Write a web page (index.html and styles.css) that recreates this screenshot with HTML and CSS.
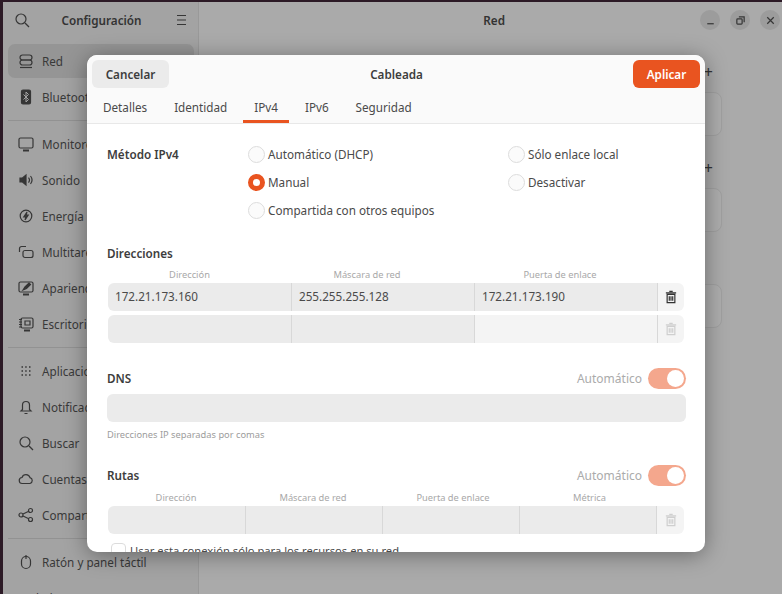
FILE: index.html
```html
<!DOCTYPE html>
<html lang="es">
<head>
    <meta charset="UTF-8">
    <meta name="viewport" content="width=device-width, initial-scale=1.0">
    <title>Configuración - Red</title>
    <link rel="stylesheet" href="styles.css">
</head>

<body>
    <div class="window">
        <aside class="sidebar">
            <div class="side-header">
                <svg class="icon" viewBox="0 0 16 16"><circle cx="7" cy="7" r="5"/><path d="M11 11l4 4"/></svg>
                <span class="side-title">Configuración</span>
                <svg class="icon" viewBox="0 0 16 16"><path d="M4 3.5h9M4 8h9M4 12.5h9"/></svg>
            </div>
            <ul class="side-list">
                <li class="side-item selected"><svg class="icon" viewBox="0 0 16 16"><rect x="2" y="2" width="12" height="5" rx="2.5"/><rect x="2" y="7" width="12" height="5" rx="2.5"/><path d="M2 14.5h12"/></svg>Red</li>
                <li class="side-item"><svg class="icon" viewBox="0 0 16 16"><rect class="solid" x="3.5" y="1" width="9" height="14" rx="1.5"/><path class="knock" d="M5.5 5.5l5 5L8 13V3l2.5 2.5-5 5"/></svg>Bluetooth</li>
                <li class="side-sep"></li>
                <li class="side-item"><svg class="icon" viewBox="0 0 16 16"><rect x="1" y="2" width="14" height="10" rx="1.5"/><path d="M5 14.5h6" stroke-width="2"/></svg>Monitores</li>
                <li class="side-item"><svg class="icon" viewBox="0 0 16 16"><path class="solid" d="M2 6h2.5L8 3v10L4.5 10H2z"/><path d="M10.5 5.5a4 4 0 0 1 0 5M12.5 4a6.5 6.5 0 0 1 0 8"/></svg>Sonido</li>
                <li class="side-item"><svg class="icon" viewBox="0 0 16 16"><circle cx="8" cy="8" r="5.8"/><path class="solid" d="M9 4L5.8 8.8H8L7 12l3.2-4.8H8z"/></svg>Energía</li>
                <li class="side-item"><svg class="icon" viewBox="0 0 16 16"><path d="M1.5 8V4.5a2 2 0 0 1 2-2H8"/><rect x="5" y="6.5" width="10" height="7" rx="2"/></svg>Multitarea</li>
                <li class="side-item"><svg class="icon" viewBox="0 0 16 16"><rect x="1" y="2" width="14" height="10" rx="1.5"/><path d="M5 14.5h6" stroke-width="2"/><path class="solid" d="M5 10l2-3 4-4 1.5 1.5-4 4z"/></svg>Apariencia</li>
                <li class="side-item"><svg class="icon" viewBox="0 0 16 16"><rect x="3" y="2" width="12" height="10" rx="1.5"/><path d="M6 14.5h6" stroke-width="2"/><path d="M1 3.5h3M1 6h3M1 8.5h3M1 11h3M7 5h5v4H7z"/></svg>Escritorio</li>
                <li class="side-sep"></li>
                <li class="side-item"><svg class="icon" viewBox="0 0 16 16"><path class="dots" d="M3.5 4h1.5M7.2 4h1.5M11 4h1.5M3.5 8h1.5M7.2 8h1.5M11 8h1.5M3.5 12h1.5M7.2 12h1.5M11 12h1.5"/></svg>Aplicaciones</li>
                <li class="side-item"><svg class="icon" viewBox="0 0 16 16"><path d="M4.5 10.5V6a3.5 3.5 0 0 1 7 0v4.5l1.5 1.5H3zM6.5 14.5h3"/></svg>Notificaciones</li>
                <li class="side-item"><svg class="icon" viewBox="0 0 16 16"><circle cx="7" cy="7" r="5"/><path d="M11 11l4 4"/></svg>Buscar</li>
                <li class="side-item"><svg class="icon" viewBox="0 0 16 16"><path d="M4.5 12.5a3 3 0 0 1-.5-6 4.2 4.2 0 0 1 8 .2 3 3 0 0 1 0 5.8z"/></svg>Cuentas en línea</li>
                <li class="side-item"><svg class="icon" viewBox="0 0 16 16"><circle cx="3" cy="8" r="2"/><circle cx="12.5" cy="3.5" r="2"/><circle cx="12.5" cy="12.5" r="2"/><path d="M5 7l5.8-2.7M5 9l5.8 2.7"/></svg>Compartir</li>
                <li class="side-sep"></li>
                <li class="side-item"><svg class="icon" viewBox="0 0 16 16"><rect x="3.5" y="2.5" width="9" height="12" rx="4.5"/><path d="M8 1v4"/></svg>Ratón y panel táctil</li>
                <li class="side-item">Teclado</li>
            </ul>
        </aside>

        <main class="main">
            <div class="main-header">
                <span class="main-title">Red</span>
                <div class="win-buttons">
                    <span class="win-btn"><svg class="icon small" viewBox="0 0 16 16"><path d="M4 12h8"/></svg></span>
                    <span class="win-btn"><svg class="icon small" viewBox="0 0 16 16"><rect x="3.5" y="6" width="6.5" height="6.5" rx="1"/><path d="M6 3.5h6.5V10"/></svg></span>
                    <span class="win-btn"><svg class="icon small" viewBox="0 0 16 16"><path d="M4 4l8 8M12 4l-8 8"/></svg></span>
                </div>
            </div>
            <section class="net-group"><div class="plus">+</div><div class="net-card"></div></section>
            <section class="net-group"><div class="plus">+</div><div class="net-card"></div></section>
            <section class="net-group"><div class="plus">&nbsp;</div><div class="net-card"></div></section>
        </main>
    </div>

    <div class="dialog">
        <header class="dlg-head">
            <div class="dlg-bar">
                <button class="btn">Cancelar</button>
                <span class="dlg-title">Cableada</span>
                <button class="btn primary">Aplicar</button>
            </div>
            <nav class="tabs">
                <span class="tab">Detalles</span>
                <span class="tab">Identidad</span>
                <span class="tab active">IPv4</span>
                <span class="tab">IPv6</span>
                <span class="tab">Seguridad</span>
            </nav>
        </header>

        <div class="dlg-body">
            <div class="method">
                <span class="heading">Método IPv4</span>
                <div class="radio-col">
                    <label class="radio"><i class="dot"></i>Automático (DHCP)</label>
                    <label class="radio"><i class="dot on"></i>Manual</label>
                    <label class="radio"><i class="dot"></i>Compartida con otros equipos</label>
                </div>
                <div class="radio-col">
                    <label class="radio"><i class="dot"></i>Sólo enlace local</label>
                    <label class="radio"><i class="dot"></i>Desactivar</label>
                </div>
            </div>

            <section class="block addresses">
                <div class="heading">Direcciones</div>
                <div class="cols heads-3 col-heads">
                    <span>Dirección</span><span>Máscara de red</span><span>Puerta de enlace</span><span></span>
                </div>
                <div class="cols cols-3 row">
                    <span class="cell">172.21.173.160</span>
                    <span class="cell">255.255.255.128</span>
                    <span class="cell">172.21.173.190</span>
                    <span class="cell trash">
                        <svg class="trash-icon" viewBox="0 0 14 16"><path d="M5 1.5h4M1 3.2h12M2.5 5h9v9.5h-9zM5 7v5.5M7 7v5.5M9 7v5.5"/></svg>
                    </span>
                </div>
                <div class="cols cols-3 row">
                    <span class="cell"></span>
                    <span class="cell"></span>
                    <span class="cell faint"></span>
                    <span class="cell trash faint">
                        <svg class="trash-icon off" viewBox="0 0 14 16"><path d="M5 1.5h4M1 3.2h12M2.5 5h9v9.5h-9zM5 7v5.5M7 7v5.5M9 7v5.5"/></svg>
                    </span>
                </div>
            </section>

            <section class="block dns">
                <div class="block-head">
                    <span class="heading">DNS</span>
                    <span class="auto">Automático</span>
                    <span class="toggle"></span>
                </div>
                <div class="entry"></div>
                <div class="hint">Direcciones IP separadas por comas</div>
            </section>

            <section class="block routes">
                <div class="block-head">
                    <span class="heading">Rutas</span>
                    <span class="auto">Automático</span>
                    <span class="toggle"></span>
                </div>
                <div class="cols heads-4 col-heads tight">
                    <span>Dirección</span><span>Máscara de red</span><span>Puerta de enlace</span><span>Métrica</span><span></span>
                </div>
                <div class="cols cols-4 row">
                    <span class="cell"></span>
                    <span class="cell"></span>
                    <span class="cell"></span>
                    <span class="cell"></span>
                    <span class="cell trash faint">
                        <svg class="trash-icon off" viewBox="0 0 14 16"><path d="M5 1.5h4M1 3.2h12M2.5 5h9v9.5h-9zM5 7v5.5M7 7v5.5M9 7v5.5"/></svg>
                    </span>
                </div>
                <label class="check"><i class="box"></i>Usar esta conexión sólo para los recursos en su red</label>
            </section>
        </div>
    </div>
</body>
</html>
```

FILE: styles.css
```css
* {
    box-sizing: border-box;
}

html,
body {
    height: 100%;
}

body {
    margin: 0;
    overflow: hidden;
    font-family: "Noto Sans", sans-serif;
    font-size: 11.7px;
    color: #3d3d3d;
    background-color: #2c1a26;
}

.icon {
    width: 16px;
    height: 16px;
    flex: none;
    fill: none;
    stroke: #363636;
    stroke-width: 1.2;
}

.icon.small {
    width: 13px;
    height: 13px;
    stroke-width: 1.5;
}

.icon .solid {
    fill: #363636;
}

.icon .knock {
    stroke: #a3a3a3;
    stroke-width: 1;
}

.icon .dots {
    stroke-width: 1.6;
}

/* window behind the dialog */
.window {
    display: flex;
    height: 592px;
    margin: 2px 0 0 3px;
    background-color: #aaaaaa;
}

.sidebar {
    width: 196px;
    flex: none;
    padding: 0 4px 0 5px;
    background-color: #a3a3a3;
    border-right: 1px solid #999;
    overflow: hidden;
}

.side-header {
    display: flex;
    align-items: center;
    justify-content: space-between;
    height: 36px;
    padding: 0 5px 0 6px;
}

.side-title {
    font-weight: 600;
    color: #333;
}

.side-list {
    list-style-type: none;
    margin: 6px 0 0;
    padding: 0;
}

.side-item {
    display: flex;
    align-items: center;
    gap: 8px;
    height: 34px;
    margin-bottom: 2px;
    padding-left: 10px;
    border-radius: 7px;
    color: #393939;
}

.side-item.selected {
    background-color: #959595;
}

.side-sep {
    height: 1px;
    margin: 6px 0;
    background-color: #929292;
}

.main {
    flex: 1;
    padding-right: 60px;
}

.main-header {
    display: flex;
    align-items: center;
    justify-content: flex-end;
    height: 36px;
    margin-right: -60px;
    padding-right: 2px;
}

.main-title {
    margin-right: 195px;
    font-weight: 600;
    color: #333;
}

.win-buttons {
    display: flex;
    gap: 10px;
}

.win-btn {
    display: flex;
    align-items: center;
    justify-content: center;
    width: 20px;
    height: 20px;
    border-radius: 50%;
    background-color: #9c9c9c;
}

.net-group {
    height: 96px;
    padding-top: 24px;
}

.plus {
    height: 30px;
    text-align: right;
    font-size: 16px;
    line-height: 20px;
    padding-right: 9px;
    color: #333;
}

.net-card {
    height: 44px;
    border: 1px solid #a0a0a0;
    border-radius: 8px;
    background-color: #adadad;
}

/* dialog */
.dialog {
    position: absolute;
    left: 87px;
    top: 55px;
    width: 618px;
    height: 497px;
    display: flex;
    flex-direction: column;
    overflow: hidden;
    border-radius: 10px;
    background-color: #fff;
    box-shadow: 0 3px 22px rgba(0, 0, 0, 0.38);
}

.dlg-head {
    height: 69px;
    flex: none;
    background-color: #fafafa;
    border-bottom: 1px solid #e8e8e8;
}

.dlg-bar {
    display: flex;
    align-items: center;
    justify-content: space-between;
    padding: 5px 5px 0;
}

.dlg-title {
    margin-right: 9px;
    font-weight: 600;
    color: #3d3d3d;
}

.btn {
    height: 28px;
    width: 77px;
    border: none;
    border-radius: 6px;
    background-color: #ebebeb;
    font-family: inherit;
    font-size: 11.7px;
    font-weight: 600;
    color: #3d3d3d;
}

.btn.primary {
    width: 67px;
    background-color: #e95420;
    color: #fff;
}

.tabs {
    display: flex;
    gap: 5px;
    padding: 5px 0 0 5px;
}

.tab {
    height: 30px;
    padding: 0 11px;
    line-height: 28px;
    color: #4a4a4a;
}

.tab.active {
    border-bottom: 3px solid #e95420;
}

.dlg-body {
    flex: 1;
    overflow: hidden;
    padding: 23px 19px 0 20px;
}

.heading {
    font-weight: 600;
    line-height: 16px;
    color: #3d3d3d;
}

.method {
    display: flex;
}

.method .heading {
    width: 141px;
    flex: none;
    margin-top: -1px;
}

.radio-col {
    display: flex;
    flex-direction: column;
    flex: none;
    gap: 10px;
    width: 260px;
    margin-top: -2px;
}

.radio-col + .radio-col {
    width: 178px;
}

.radio {
    display: flex;
    align-items: center;
    gap: 3px;
    height: 18px;
    color: #4a4a4a;
}

.dot {
    width: 17px;
    height: 17px;
    flex: none;
    border: 1.5px solid #dcdcdc;
    border-radius: 50%;
    background-color: #fbfbfb;
}

.dot.on {
    border: 5px solid #e95420;
    background-color: #fff;
}

.addresses {
    margin-top: 26px;
}

.cols {
    display: grid;
    margin: 0 1px;
    width: 576px;
}

.cols-3 {
    grid-template-columns: 184px 183px 183px 26px;
}

.heads-3 {
    grid-template-columns: 163px 192px 194px 27px;
}

.cols-4 {
    grid-template-columns: 138px 137px 137px 137px 27px;
}

.heads-4 {
    grid-template-columns: 136px 138px 142px 131px 29px;
}

.col-heads {
    margin-top: 7px;
    height: 15px;
    text-align: center;
    font-size: 9.3px;
    line-height: 14px;
    color: #a8a8a8;
}

.col-heads.tight {
    margin-top: 5px;
    height: 15px;
}

.row {
    height: 28px;
    margin-bottom: 4px;
    border-radius: 6px;
    overflow: hidden;
}

.cell {
    padding-left: 7px;
    border-right: 1px solid #d8d8d8;
    background-color: #ebebeb;
    line-height: 27px;
    color: #4a4a4a;
}

.cell.faint {
    background-color: #f4f4f4;
}

.cell.trash {
    display: flex;
    align-items: center;
    justify-content: center;
    padding: 0;
    border-right: none;
    background-color: #f4f4f4;
}

.trash-icon {
    width: 12px;
    height: 14px;
    fill: none;
    stroke: #333;
    stroke-width: 1.4;
}

.trash-icon.off {
    stroke: #cfcfcf;
}

.dns {
    margin-top: 24px;
}

.block-head {
    display: flex;
    align-items: center;
    height: 22px;
}

.block-head .heading {
    flex: 1;
}

.auto {
    margin-right: 6px;
    font-size: 12px;
    color: #ababab;
}

.toggle {
    position: relative;
    width: 38px;
    height: 21px;
    border-radius: 11px;
    background-color: #f4a78d;
}

.toggle::after {
    content: "";
    position: absolute;
    top: 2px;
    right: 2px;
    width: 17px;
    height: 17px;
    border-radius: 50%;
    background-color: #fff;
}

.entry {
    width: 579px;
    height: 28px;
    margin-top: 5px;
    border-radius: 6px;
    background-color: #ebebeb;
}

.hint {
    margin-top: 6px;
    font-size: 9.3px;
    line-height: 14px;
    color: #9c9c9c;
}

.routes {
    margin-top: 22px;
}

.check {
    display: flex;
    align-items: center;
    gap: 4px;
    margin: 9px 0 0 4px;
    font-size: 11.2px;
    color: #4a4a4a;
}

.box {
    width: 15px;
    height: 15px;
    flex: none;
    border: 1.5px solid #dcdcdc;
    border-radius: 4px;
}
```
